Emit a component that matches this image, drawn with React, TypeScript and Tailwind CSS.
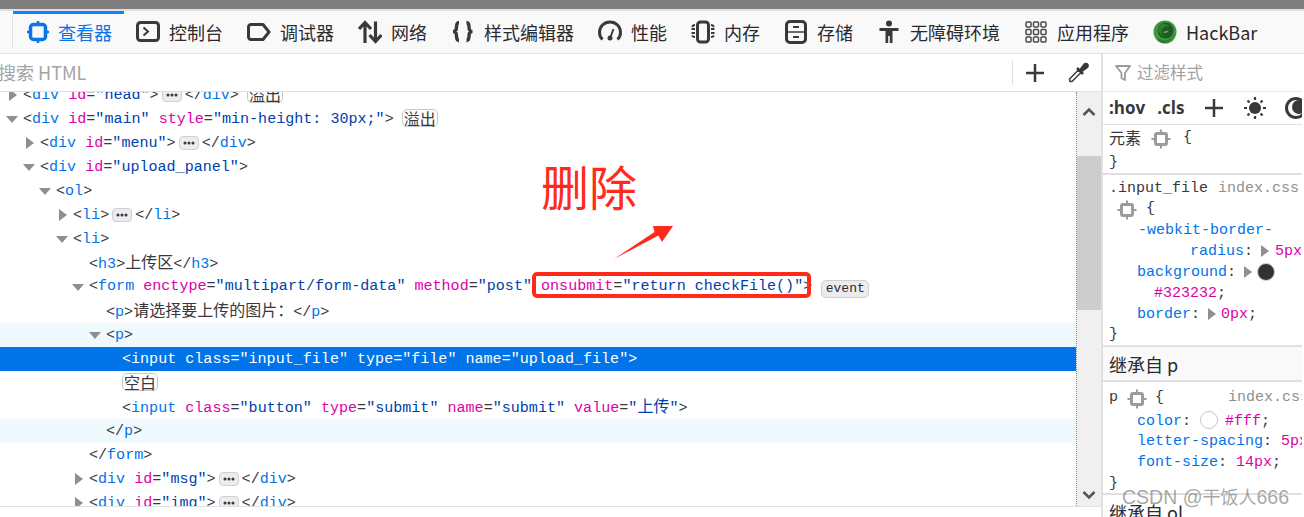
import type { ReactNode } from 'react';

// token helpers for the markup tree
const P = ({ children }: { children: ReactNode }) => <span className="text-[#38383d]">{children}</span>;
const T = ({ children }: { children: ReactNode }) => <span className="text-[#0074e8]">{children}</span>;
const A = ({ children }: { children: ReactNode }) => <span className="text-[#dd00a9]">{children}</span>;
const V = ({ children }: { children: ReactNode }) => <span className="text-[#003eaa]">{children}</span>;
const C = ({ children }: { children: ReactNode }) => (
  <span className="font-['Noto_Sans_CJK_SC',sans-serif] text-[16px] leading-none text-[#38383d]">{children}</span>
);

const Attr = ({ n, v }: { n: string; v: string }) => (
  <>
    {' '}
    <A>{n}</A>
    <P>=</P>
    <V>"{v}"</V>
  </>
);

const Open = ({ name, children }: { name: string; children?: ReactNode }) => (
  <>
    <P>&lt;</P>
    <T>{name}</T>
    {children}
    <P>&gt;</P>
  </>
);

const Close = ({ name }: { name: string }) => (
  <>
    <P>&lt;/</P>
    <T>{name}</T>
    <P>&gt;</P>
  </>
);

const Dots = () => (
  <svg width="20" height="14" viewBox="0 0 20 14" className="mx-[3px] inline-block align-[-3px]">
    <rect x="0.5" y="0.5" width="19" height="13" rx="3.5" fill="#ececee" stroke="#cfcfd3" />
    <circle cx="6" cy="7" r="1.5" fill="#38383d" />
    <circle cx="10" cy="7" r="1.5" fill="#38383d" />
    <circle cx="14" cy="7" r="1.5" fill="#38383d" />
  </svg>
);

const Badge = ({ children }: { children: ReactNode }) => (
  <span className="ml-[8px] inline-flex h-[18px] w-[36px] items-center justify-center rounded-[5px] border border-[#c8c8cc] bg-white align-[-2px] font-['Noto_Sans_CJK_SC',sans-serif] text-[16px] leading-none text-[#38383d]">
    {children}
  </span>
);

const TriRight = () => (
  <svg width="8" height="12" viewBox="0 0 8 12" className="shrink-0">
    <path d="M0 0 L8 6 L0 12 Z" fill="#8f8f93" />
  </svg>
);

const TriDown = () => (
  <svg width="12" height="7" viewBox="0 0 12 7" className="shrink-0">
    <path d="M0 0 H12 L6 7 Z" fill="#8f8f93" />
  </svg>
);

function Row({
  pad,
  twisty,
  className = '',
  children,
}: {
  pad: string;
  twisty?: 'open' | 'closed';
  className?: string;
  children: ReactNode;
}) {
  return (
    <div className={`flex h-6 shrink-0 items-center whitespace-pre ${pad} ${className}`}>
      {twisty && (
        <span className="-ml-[17px] flex w-[17px] shrink-0 items-center">
          {twisty === 'open' ? (
            <TriDown />
          ) : (
            <span className="ml-[3px] flex">
              <TriRight />
            </span>
          )}
        </span>
      )}
      <span className="leading-[20px]">{children}</span>
    </div>
  );
}

// devtools toolbar icons
const Svg = ({ children }: { children: ReactNode }) => (
  <svg width="24" height="24" viewBox="0 0 24 24" fill="none" stroke="#38383d" strokeWidth="3" className="shrink-0">
    {children}
  </svg>
);

const icons: Record<string, ReactNode> = {
  inspector: (
    <Svg>
      <rect x="5.5" y="4.5" width="15" height="15" rx="3" stroke="#0a74e8" strokeWidth="3.5" />
      <path d="M13 1V4M13 20V23M2 12H5M21 12H24" stroke="#0a74e8" strokeWidth="2.5" />
    </Svg>
  ),
  console: (
    <Svg>
      <rect x="1.5" y="2.5" width="21" height="18" rx="3" />
      <path d="M7.5 7.5L12 11.5L7.5 15.5" strokeWidth="2" />
    </Svg>
  ),
  debugger: (
    <Svg>
      <path d="M4 4.5H16L22 12L16 19.5H4C2.8 19.5 1.5 18.5 1.5 17V7C1.5 5.5 2.8 4.5 4 4.5Z" strokeLinejoin="round" />
    </Svg>
  ),
  network: (
    <Svg>
      <path d="M7 23V3M1 9L7 2.5L13 9M17.5 1.5V21M11.5 15L17.5 21.5L23.5 15" strokeWidth="3.2" />
    </Svg>
  ),
  style: (
    <Svg>
      <path d="M8 2.5C4.5 2.5 6 8 5 10C4.500 11 3.500 11.500 2 11.500C3.500 11.500 4.500 12 5 13C6 15 4.500 20.500 8 20.500M15.500 2.500C19 2.500 17.500 8 18.500 10C19 11 20 11.500 21.500 11.500C20 11.500 19 12 18.500 13C17.500 15 19 20.500 15.500 20.500" strokeWidth="3.4" />
    </Svg>
  ),
  perf: (
    <Svg>
      <path d="M4.500 19.500C2.500 17.500 1.500 15 1.500 12.500C1.500 6.500 6 2 12 2C18 2 22.500 6.500 22.500 12.500C22.500 15 21.500 17.500 19.500 19.500" />
      <path d="M15.500 9L12.500 17" strokeWidth="2" />
      <circle cx="12" cy="18" r="2.500" fill="#38383d" stroke="none" />
    </Svg>
  ),
  memory: (
    <Svg>
      <rect x="6.500" y="2" width="11" height="20" rx="3" />
      <path d="M4 5C2.500 5 1.500 6 1 7M4 9H0.500M4 13H0.500M4 17C2.500 17 1.500 16.500 1 15.500M20 5C21.500 5 22.500 6 23 7M20 9H23.500M20 13H23.500M20 17C21.500 17 22.500 16.500 23 15.500" strokeWidth="1.800" />
    </Svg>
  ),
  storage: (
    <Svg>
      <rect x="2.500" y="1.500" width="19" height="21" rx="3.500" />
      <path d="M2.500 12H21.500" strokeWidth="1.500" />
      <path d="M9 7H15M9 17H15" strokeWidth="2" />
    </Svg>
  ),
  a11y: (
    <svg width="24" height="24" viewBox="0 0 24 24" fill="#38383d" className="shrink-0">
      <circle cx="12" cy="3.500" r="3" />
      <path d="M2.500 8H21.500V11H15.500V23H12.800V16H11.200V23H8.500V11H2.500Z" />
    </svg>
  ),
  apps: (
    <svg width="24" height="24" viewBox="0 0 24 24" fill="none" stroke="#4a4a4f" strokeWidth="1.500" className="shrink-0">
      {[2, 9.5, 17].map(y =>
        [2, 9.5, 17].map(x => <rect key={`${x}-${y}`} x={x} y={y} width="5" height="5" rx="1" />)
      )}
    </svg>
  ),
  hackbar: (
    <svg width="24" height="24" viewBox="0 0 24 24" className="shrink-0">
      <circle cx="12" cy="12" r="11.500" fill="#3c9a3c" />
      <circle cx="12.500" cy="10.500" r="8" fill="#1f5a22" />
      <path d="M5 6C9 3 14 4 17 6C14 6 10 7 9 10C8 12 9 15 12 16C8 16 4 11 5 6Z" fill="#2f7f30" />
      <path d="M10 12C12 14 15 13 15.500 10C13.500 11 12 11.500 10 12Z" fill="#6fb45f" />
      <path d="M4 17C8 22 16 22 21 15C19 21 14 23.500 9.500 23C7 22.500 5 20 4 17Z" fill="#2a7a2c" />
    </svg>
  ),
};

const tabs = [
  { key: 'inspector', label: '查看器' },
  { key: 'console', label: '控制台' },
  { key: 'debugger', label: '调试器' },
  { key: 'network', label: '网络' },
  { key: 'style', label: '样式编辑器' },
  { key: 'perf', label: '性能' },
  { key: 'memory', label: '内存' },
  { key: 'storage', label: '存储' },
  { key: 'a11y', label: '无障碍环境' },
  { key: 'apps', label: '应用程序' },
  { key: 'hackbar', label: 'HackBar' },
];

function Toolbar() {
  return (
    <div className="relative flex h-[43px] shrink-0 items-center border-b border-[#e0e0e2] bg-[#f9f9fa] pl-[25px]">
      <div className="absolute top-0 left-[13px] h-[3px] w-[111px] bg-[#0a84ff]" />
      <div className="absolute top-[6px] left-[12px] h-[30px] w-px bg-[#e0e0e2]" />
      {tabs.map((t, i) => (
        <div key={t.key} className="mr-[24px] flex items-center">
          {icons[t.key]}
          <span
            className={`ml-[9px] whitespace-pre font-['Noto_Sans_CJK_SC',sans-serif] text-[18px] leading-none ${
              i === 0 ? 'text-[#0a74e8]' : 'text-[#2a2a2e]'
            }`}
          >
            {t.label}
          </span>
        </div>
      ))}
    </div>
  );
}

const Chip = ({ className = '' }: { className?: string }) => (
  <svg width="20" height="20" viewBox="0 0 20 20" fill="none" stroke="#9b9b9f" className={`inline-block shrink-0 ${className}`}>
    <rect x="4.500" y="4.500" width="11" height="11" rx="1.500" strokeWidth="3" />
    <path d="M10 0.500V3M10 17V19.500M0.500 10H3M17 10H19.500" strokeWidth="2" />
  </svg>
);

const Plus = () => (
  <svg width="20" height="20" viewBox="0 0 20 20" stroke="#38383d" strokeWidth="2.500" className="shrink-0">
    <path d="M10 1V19M1 10H19" />
  </svg>
);

const Prop = ({ children }: { children: ReactNode }) => <span className="text-[#0074e8]">{children}</span>;
const Val = ({ className = '', children }: { className?: string; children: ReactNode }) => (
  <span className={`text-[#dd00a9] ${className}`}>{children}</span>
);
const Line = ({ className = '', children }: { className?: string; children: ReactNode }) => (
  <div className={`flex h-[21px] items-center whitespace-pre text-[#38383d] ${className}`}>{children}</div>
);

function RulesPane() {
  return (
    <div className="flex w-[201px] shrink-0 flex-col overflow-hidden border-l-2 border-[#e0e0e2] font-['Liberation_Mono',monospace] text-[15px]">
      {/* filter */}
      <div className="flex h-[38px] shrink-0 items-center border-b border-[#e8e8ea] pl-[12px] font-['Noto_Sans_CJK_SC',sans-serif] text-[16.5px] text-[#a0a0a4]">
        <svg width="16" height="20" viewBox="0 0 16 20" fill="none" stroke="#9b9b9f" strokeWidth="1.800" className="shrink-0">
          <path d="M1 3H15L10 10V17L6.500 15V10Z" strokeLinejoin="round" />
        </svg>
        <span className="ml-[6px] whitespace-pre">过滤样式</span>
      </div>
      {/* pseudo class bar */}
      <div className="flex h-[33px] shrink-0 items-center border-b border-[#e0e0e2] pl-[6px] font-['Open_Sans',sans-serif] text-[17px] font-bold text-[#38383d]">
        <span>:hov</span>
        <span className="ml-[12px]">.cls</span>
        <span className="ml-[20px] flex">
          <Plus />
        </span>
        <svg width="24" height="24" viewBox="0 0 24 24" stroke="#38383d" strokeWidth="2.200" className="ml-[19px] shrink-0">
          <circle cx="12" cy="12" r="6" fill="#38383d" stroke="none" />
          <path d="M12 1V4M12 20V23M1 12H4M20 12H23M4.500 4.500L6.500 6.500M17.500 17.500L19.500 19.500M4.500 19.500L6.500 17.500M17.500 6.500L19.500 4.500" />
        </svg>
        <svg width="22" height="22" viewBox="0 0 22 22" className="ml-[18px] shrink-0">
          <circle cx="11" cy="11" r="11" fill="#38383d" />
          <circle cx="11" cy="11" r="8" fill="#f9f9fa" />
          <circle cx="14" cy="10" r="7" fill="#38383d" />
        </svg>
      </div>

      {/* element rule */}
      <div className="h-[50px] shrink-0 border-b-2 border-[#e0e0e2] pt-[3px] pl-[6px]">
        <Line>
          <span className="mb-[4px] font-['Noto_Sans_CJK_SC',sans-serif] text-[16px]">元素</span>
          <Chip className="ml-[10px]" />
          <span className="ml-[12px]">{'{'}</span>
        </Line>
        <Line className="mt-[4px]">{'}'}</Line>
      </div>

      {/* .input_file */}
      <div className="h-[172px] shrink-0 border-b-2 border-[#e0e0e2] pt-[4px] pl-[6px]">
        <Line>
          <span>.input_file</span>
          <span className="ml-[10px] text-[#8f8f93]">index.css:</span>
        </Line>
        <Line className="-mt-[1px] pl-[8px]">
          <Chip />
          <span className="ml-[9px]">{'{'}</span>
        </Line>
        <Line className="mt-[1px] pl-[29px]">
          <Prop>-webkit-border-</Prop>
        </Line>
        <Line className="pl-[81px]">
          <Prop>radius</Prop>:
          <span className="mr-[6px] mb-[4px] ml-[8px] flex">
            <TriRight />
          </span>
          <Val>5px</Val>
        </Line>
        <Line className="pl-[28px]">
          <Prop>background</Prop>:
          <span className="mr-[5px] mb-[4px] ml-[8px] flex">
            <TriRight />
          </span>
          <span className="mb-[4px] h-[18px] w-[18px] rounded-full border border-[#d0d0d0] bg-[#323232]" />
        </Line>
        <Line className="pl-[45px]">
          <Val>#323232</Val>;
        </Line>
        <Line className="pl-[28px]">
          <Prop>border</Prop>:
          <span className="mr-[5px] mb-[4px] ml-[8px] flex">
            <TriRight />
          </span>
          <Val>0px</Val>;
        </Line>
        <Line className="-mt-[1px]">{'}'}</Line>
      </div>

      {/* inherited */}
      <div className="flex h-[35px] shrink-0 items-center border-b-2 border-[#e0e0e2] bg-[#f9f9fa] pt-[2px] pl-[6px] font-['Noto_Sans_CJK_SC',sans-serif] text-[18px] text-[#2a2a2e]">
        继承自 p
      </div>
      <div className="h-[113px] shrink-0 border-b-2 border-[#e0e0e2] pt-[6px] pl-[6px]">
        <Line className="mb-[3px]">
          <span>p</span>
          <Chip className="ml-[9px]" />
          <span className="ml-[8px]">{'{'}</span>
          <span className="ml-[64px] text-[#8f8f93]">index.css</span>
        </Line>
        <Line className="pl-[28px]">
          <Prop>color</Prop>:
          <span className="mb-[5px] ml-[9px] h-[18px] w-[18px] rounded-full border border-[#c8c8cc] bg-white" />
          <Val className="ml-[7px]">#fff</Val>;
        </Line>
        <Line className="-mt-[1px] pl-[28px]">
          <Prop>letter-spacing</Prop>: <Val>5px</Val>
        </Line>
        <Line className="pl-[28px]">
          <Prop>font-size</Prop>: <Val>14px</Val>;
        </Line>
        <Line>{'}'}</Line>
      </div>
      <div className="flex h-[35px] shrink-0 items-center pl-[6px] font-['Noto_Sans_CJK_SC',sans-serif] text-[18px] text-[#2a2a2e]">
        继承自 ol
      </div>
    </div>
  );
}

function MarkupTree() {
  return (
    <div className="flex-1 overflow-hidden font-['Liberation_Mono',monospace] text-[15.07px]">
      <div className="-mt-[9px] flex flex-col">
        <Row pad="pl-[23px]" twisty="closed">
          <Open name="div">
            <Attr n="id" v="head" />
          </Open>
          <Dots />
          <Close name="div" />
          <Badge>溢出</Badge>
        </Row>
        <Row pad="pl-[23px]" twisty="open">
          <Open name="div">
            <Attr n="id" v="main" />
            <Attr n="style" v="min-height: 30px;" />
          </Open>
          <Badge>溢出</Badge>
        </Row>
        <Row pad="pl-[40px]" twisty="closed">
          <Open name="div">
            <Attr n="id" v="menu" />
          </Open>
          <Dots />
          <Close name="div" />
        </Row>
        <Row pad="pl-[40px]" twisty="open">
          <Open name="div">
            <Attr n="id" v="upload_panel" />
          </Open>
        </Row>
        <Row pad="pl-[56px]" twisty="open">
          <Open name="ol" />
        </Row>
        <Row pad="pl-[73px]" twisty="closed">
          <Open name="li" />
          <Dots />
          <Close name="li" />
        </Row>
        <Row pad="pl-[73px]" twisty="open">
          <Open name="li" />
        </Row>
        <Row pad="pl-[89px]">
          <Open name="h3" />
          <C>上传区</C>
          <Close name="h3" />
        </Row>
        <Row pad="pl-[89px]" twisty="open">
          <Open name="form">
            <Attr n="enctype" v="multipart/form-data" />
            <Attr n="method" v="post" />
            <Attr n="onsubmit" v="return checkFile()" />
          </Open>
          <span className="ml-[9px] inline-flex h-[18px] w-[48px] items-center justify-center rounded-[5px] border border-[#cfcfd3] bg-[#ececee] align-[-2px] text-[13px] leading-none text-[#2a2a2e]">
            event
          </span>
        </Row>
        <Row pad="pl-[106px]">
          <Open name="p" />
          <C>请选择要上传的图片：</C>
          <Close name="p" />
        </Row>
        <Row pad="pl-[106px]" twisty="open" className="bg-[#f0f9fe]">
          <Open name="p" />
        </Row>
        <Row pad="pl-[122px]" className="bg-[#0074e8] text-white">
          &lt;input class="input_file" type="file" name="upload_file"&gt;
        </Row>
        <Row pad="pl-[122px]">
          <span className="inline-flex h-[18px] w-[36px] items-center justify-center rounded-[5px] border border-[#c8c8cc] bg-white align-[-2px] font-['Noto_Sans_CJK_SC',sans-serif] text-[16px] leading-none text-[#38383d]">
            空白
          </span>
        </Row>
        <Row pad="pl-[122px]">
          <Open name="input">
            <Attr n="class" v="button" />
            <Attr n="type" v="submit" />
            <Attr n="name" v="submit" />
            <> </>
            <A>value</A>
            <P>=</P>
            <V>
              "<span className="font-['Noto_Sans_CJK_SC',sans-serif] text-[16px] leading-none">上传</span>"
            </V>
          </Open>
        </Row>
        <Row pad="pl-[106px]" className="bg-[#f0f9fe]">
          <Close name="p" />
        </Row>
        <Row pad="pl-[89px]">
          <Close name="form" />
        </Row>
        <Row pad="pl-[89px]" twisty="closed">
          <Open name="div">
            <Attr n="id" v="msg" />
          </Open>
          <Dots />
          <Close name="div" />
        </Row>
        <Row pad="pl-[89px]" twisty="closed">
          <Open name="div">
            <Attr n="id" v="img" />
          </Open>
          <Dots />
          <Close name="div" />
        </Row>
      </div>
    </div>
  );
}

export default function App() {
  return (
    <div className="relative flex h-[517px] w-[1304px] flex-col overflow-hidden bg-white font-['Noto_Sans_CJK_SC',sans-serif]">
      <div className="h-[9px] shrink-0 bg-[#7f7f7f]" />
      <div className="h-[2px] shrink-0 bg-[#e0e0e2]" />
      <Toolbar />

      <div className="flex h-[463px] shrink-0">
        {/* inspector pane */}
        <div className="flex w-[1101px] shrink-0 flex-col">
          <div className="flex h-[38px] shrink-0 items-center border-b border-[#e0e0e2] pr-[12px]">
            <span className="-ml-[2px] flex-1 font-['Noto_Sans_CJK_SC',sans-serif] text-[18px] whitespace-pre text-[#a3a3a7]">
              搜索 HTML
            </span>
            <div className="h-[25px] w-px bg-[#e0e0e2]" />
            <span className="ml-[12px] flex">
              <Plus />
            </span>
            <svg width="22" height="22" viewBox="0 0 22 22" fill="none" stroke="#38383d" className="ml-[22px] shrink-0">
              <path d="M3 19.500L2.500 17L11.500 8L14 10.500L5 19.500Z" strokeWidth="1.500" strokeLinejoin="round" />
              <path d="M10 6L16 12M13 8.500L17.500 2.500C18.500 1.500 20 2 20.500 3C21 4 20.500 4.500 20 5L14 9.500" strokeWidth="2.500" fill="#38383d" />
            </svg>
          </div>
          <div className="flex min-h-0 flex-1 border-b border-[#e0e0e2]">
            <MarkupTree />
            {/* scrollbar */}
            <div className="flex w-[25px] shrink-0 flex-col border-l border-dotted border-[#8f8f93] bg-[#f0f0f0]">
              <div className="flex h-[25px] shrink-0 items-end justify-center">
                <svg width="14" height="10" viewBox="0 0 14 10" fill="none" stroke="#555" strokeWidth="2.500">
                  <path d="M1.500 8L7 2.500L12.500 8" />
                </svg>
              </div>
              <div className="mt-[39px] h-[154px] shrink-0 bg-[#cdcdcd]" />
              <div className="flex flex-1 items-end justify-center pb-[6px]">
                <svg width="14" height="10" viewBox="0 0 14 10" fill="none" stroke="#555" strokeWidth="2.500">
                  <path d="M1.500 2L7 7.500L12.500 2" />
                </svg>
              </div>
            </div>
          </div>
          <div className="h-[10px] shrink-0" />
        </div>
        <RulesPane />
      </div>

      {/* screenshot annotations */}
      <div className="absolute top-[155px] left-[541px] font-['Noto_Sans_CJK_SC',sans-serif] text-[48px] leading-[60px] text-[#ff2a1a]">
        删除
      </div>
      <svg width="64" height="38" viewBox="0 0 64 38" className="absolute top-[224px] left-[612px]">
        <path d="M2 35L42.500 8L41 2H61L50 18L46.500 11.500Z" fill="#ff2a1a" />
      </svg>
      <div className="absolute top-[272px] left-[532px] h-[26px] w-[279px] rounded-[5px] border-4 border-[#ff2a1a]" />
      <div className="absolute top-[483px] left-[1122px] font-['Liberation_Sans',sans-serif] text-[19.5px] leading-[26px] whitespace-pre text-[#7f7f7f]/70">
        CSDN @<span className="font-['Noto_Sans_CJK_SC',sans-serif] text-[18px]">干饭人</span>666
      </div>
    </div>
  );
}
